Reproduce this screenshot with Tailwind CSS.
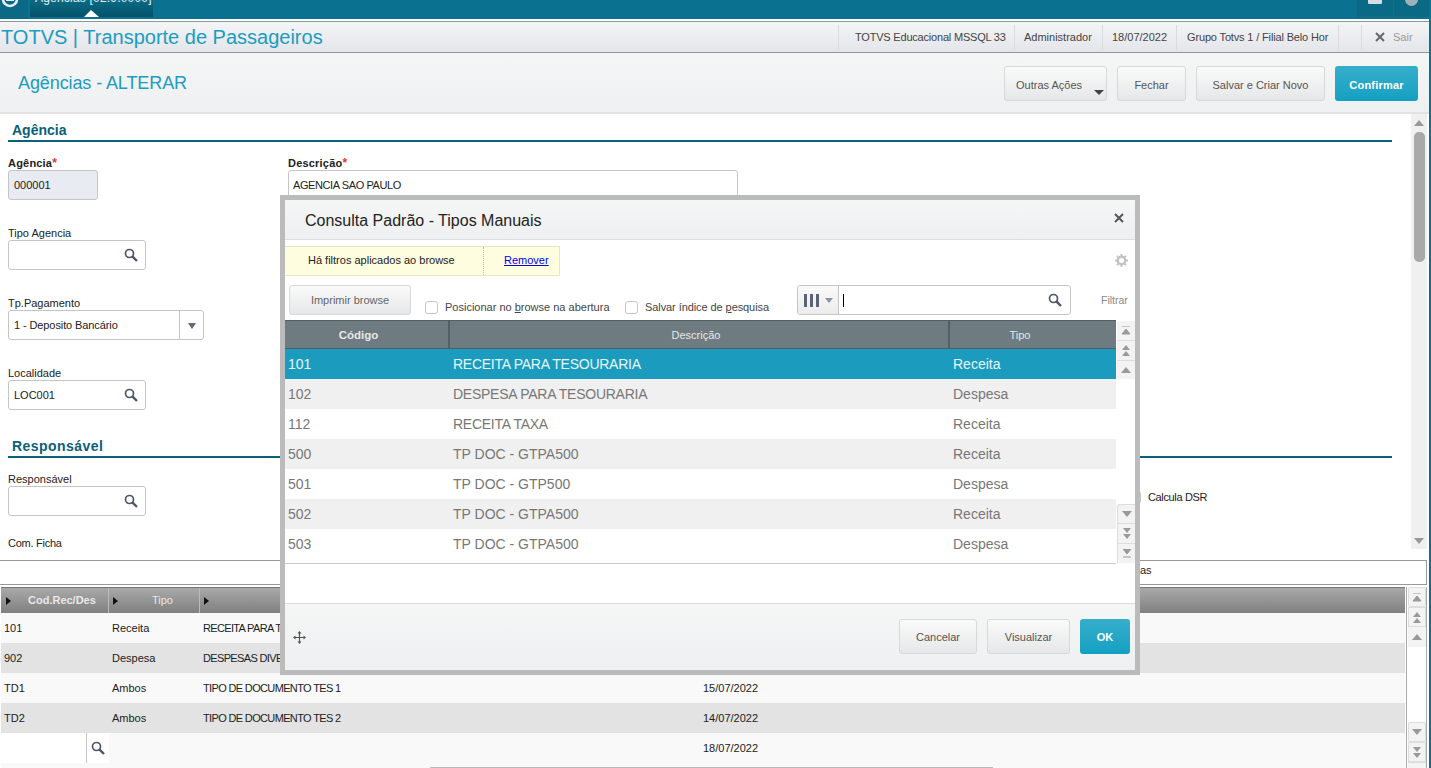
<!DOCTYPE html>
<html lang="pt-BR">

<head>
  <meta charset="UTF-8" />
  <title>TOTVS | Transporte de Passageiros</title>
  <script src="https://cdn.jsdelivr.net/npm/@tailwindcss/browser@4"></script>
</head>

<body class="bg-white">
  <div class="relative w-[1431px] h-[768px] overflow-hidden flex flex-col font-['Liberation_Sans',Arial,sans-serif] text-[11px] text-[#222] border-r-2 border-[#0b7190]">

    <!-- top menu -->
    <div class="h-[19px] shrink-0 bg-[#0b7190] flex overflow-hidden">
      <div class="w-[28px] bg-[#0a6a85] overflow-hidden">
        <svg width="28" height="19"><circle cx="10" cy="-1" r="7" fill="none" stroke="#e8eef0" stroke-width="2.6"/><path d="M6 0h8" stroke="#e8eef0" stroke-width="2"/></svg>
      </div>
      <div class="relative ml-[2px] w-[123px] h-[17px] bg-gradient-to-b from-[#0a6a85] to-[#05526a] overflow-hidden">
        <div class="flex gap-[7px] pl-[5px] -mt-[9px] leading-[14px] text-[12px] tracking-[0.2px] text-white/90 whitespace-nowrap"><span>Agências [02.9.0000]</span><span class="text-white/50">×</span></div>
        <svg class="absolute left-[54px] top-[10px]" width="15" height="7"><path d="M0 7 7 0l8 7z" fill="#fff"/></svg>
      </div>
      <div class="flex-1"></div>
      <div class="w-[36px] mr-[1px] h-[17px] bg-[#0a6a85] flex justify-center overflow-hidden">
        <div class="w-[14px] h-[4px] bg-[#d5dde2] rounded-b-[1px]"></div>
      </div>
      <div class="w-[35px] h-[17px] bg-[#0a6a85] flex justify-center overflow-hidden">
        <div class="w-[13px] h-[13px] -mt-[7px] rounded-full bg-[#9fb2bb]"></div>
      </div>
    </div>

    <!-- product bar -->
    <div class="h-[32px] shrink-0 mt-[2px] border-t border-b border-t-[#8f979b] border-b-[#8f979b] bg-gradient-to-b from-[#f3f5f6] to-[#e3e6ea] flex items-center relative">
      <div class="pl-[1px] text-[20px] leading-[28px] text-[#1b9cc0] whitespace-nowrap w-[839px]">TOTVS | Transporte de Passageiros</div>
      <div class="flex items-center h-[25px] text-[#444] whitespace-nowrap">
        <div class="w-[176px] h-full pl-[16px] leading-[25px] border-l border-[#d9dcdf] tracking-[-0.2px]">TOTVS Educacional MSSQL 33</div>
        <div class="w-[88px] h-full pl-[9px] leading-[25px] border-l border-[#d9dcdf]">Administrador</div>
        <div class="w-[74px] h-full pl-[9px] leading-[25px] border-l border-[#d9dcdf]">18/07/2022</div>
        <div class="w-[162px] h-full pl-[10px] leading-[25px] border-l border-[#d9dcdf] tracking-[-0.15px]">Grupo Totvs 1 / Filial Belo Hor</div>
        <div class="w-[23px] h-full border-l border-[#d9dcdf]"></div>
        <div class="h-full pl-[13px] flex items-center gap-[8px] border-l border-[#d9dcdf] text-[#999] w-[68px]">
          <svg width="10" height="10" viewBox="0 0 10 10"><path d="M1 1l8 8M9 1 1 9" stroke="#666" stroke-width="2"/></svg>
          <span>Sair</span>
        </div>
      </div>
    </div>

    <!-- page header -->
    <div class="h-[61px] shrink-0 border-b-2 border-[#e2e3e4] bg-gradient-to-b from-[#f5f6f6] to-[#eef0f1] flex items-center pl-[18px] pr-[11px]">
      <div class="text-[18px] text-[#1b9cc0] tracking-[-0.1px] mt-[2px]">Agências - ALTERAR</div>
      <div class="ml-auto flex gap-[10px] mt-[2px] text-[#555]">
        <button class="relative w-[103px] h-[35px] rounded-[3px] border border-[#d8d8d8] bg-gradient-to-b from-[#fafafa] to-[#e6e7e8] pt-[3px] text-left"><span class="pl-[11px]">Outras Ações</span>
          <svg class="absolute right-[2px] bottom-[5px]" width="10" height="5"><path d="M0 0h10L5 5z" fill="#444"/></svg>
        </button>
        <button class="w-[69px] h-[35px] pt-[3px] rounded-[3px] border border-[#d8d8d8] bg-gradient-to-b from-[#fafafa] to-[#e6e7e8]">Fechar</button>
        <button class="w-[129px] h-[35px] pt-[3px] rounded-[3px] border border-[#d8d8d8] bg-gradient-to-b from-[#fafafa] to-[#e6e7e8]">Salvar e Criar Novo</button>
        <button class="w-[83px] h-[35px] pt-[3px] rounded-[3px] bg-gradient-to-b from-[#35aecb] to-[#11a0c2] text-white font-bold tracking-[0.2px]">Confirmar</button>
      </div>
    </div>

    <!-- form -->
    <div class="relative h-[446px] shrink-0 overflow-hidden pl-[8px]">
      <div class="w-[1384px]">
        <div class="h-[28px] pt-[8px] pl-[4px] border-b-2 border-[#0a6078] text-[14px] leading-[16px] font-bold text-[#0a6078]">Agência</div>

        <div class="flex mt-[14px]">
          <div class="w-[280px]">
            <div class="h-[14px] leading-[14px] font-bold tracking-[0.2px]">Agência<span class="text-[#e53535] text-[12px]">*</span></div>
            <div class="w-[90px] h-[30px] rounded-[3px] border border-[#c5c5c5] bg-[#e8ebf2] pl-[5px] leading-[28px]">000001</div>
          </div>
          <div>
            <div class="h-[14px] leading-[14px] font-bold tracking-[0.2px]">Descrição<span class="text-[#e53535] text-[12px]">*</span></div>
            <div class="w-[450px] h-[30px] rounded-[3px] border border-[#c5c5c5] pl-[4px] leading-[28px] tracking-[-0.4px]">AGENCIA SAO PAULO</div>
          </div>
        </div>

        <div class="mt-[26px] h-[14px] leading-[14px]">Tipo Agencia</div>
        <div class="w-[138px] h-[30px] rounded-[3px] border border-[#c5c5c5] flex items-center justify-end pr-[7px]">
          <svg width="14" height="14" viewBox="0 0 14 14"><circle cx="5.5" cy="5.5" r="4" fill="none" stroke="#4d5666" stroke-width="1.7"/><path d="M8.6 8.6 13 13" stroke="#4d5666" stroke-width="2.4"/></svg>
        </div>

        <div class="mt-[26px] h-[14px] leading-[14px]">Tp.Pagamento</div>
        <div class="w-[196px] h-[30px] rounded-[3px] border border-[#c5c5c5] flex">
          <div class="w-[171px] pl-[5px] leading-[28px] border-r border-[#c5c5c5] tracking-[-0.1px]">1 - Deposito Bancário</div>
          <div class="flex-1 flex items-center justify-center">
            <svg width="10" height="7"><path d="M1 1h8L5 7z" fill="#667"/></svg>
          </div>
        </div>

        <div class="mt-[26px] h-[14px] leading-[14px]">Localidade</div>
        <div class="w-[138px] h-[30px] rounded-[3px] border border-[#c5c5c5] flex items-center justify-between pl-[5px] pr-[7px]">
          <span>LOC001</span>
          <svg width="14" height="14" viewBox="0 0 14 14"><circle cx="5.5" cy="5.5" r="4" fill="none" stroke="#4d5666" stroke-width="1.7"/><path d="M8.6 8.6 13 13" stroke="#4d5666" stroke-width="2.4"/></svg>
        </div>

        <div class="mt-[28px] h-[20px] pl-[4px] border-b-2 border-[#0a6078] text-[14px] leading-[16px] font-bold text-[#0a6078] tracking-[0.45px]">Responsável</div>

        <div class="mt-[14px] h-[14px] leading-[14px]">Responsável</div>
        <div class="flex items-center">
          <div class="w-[138px] h-[30px] rounded-[3px] border border-[#c5c5c5] flex items-center justify-end pr-[7px]">
            <svg width="14" height="14" viewBox="0 0 14 14"><circle cx="5.5" cy="5.5" r="4" fill="none" stroke="#4d5666" stroke-width="1.7"/><path d="M8.6 8.6 13 13" stroke="#4d5666" stroke-width="2.4"/></svg>
          </div>
          <div class="ml-[982px] -mt-[7px] w-[13px] h-[13px] rounded-[3px] border border-[#c5c5c5]"></div>
          <div class="ml-[7px] -mt-[7px] tracking-[-0.35px]">Calcula DSR</div>
        </div>

        <div class="mt-[20px] h-[14px] leading-[14px] tracking-[-0.25px]">Com. Ficha</div>
      </div>

      <!-- form scrollbar -->
      <div class="absolute left-[1411px] top-0 w-[16px] h-[435px] bg-[#f0f0f0] flex flex-col items-center">
        <svg class="mt-[6px]" width="10" height="6"><path d="M5 0l5 6H0z" fill="#999"/></svg>
        <div class="mt-[6px] w-[11px] h-[130px] rounded-[5px] bg-[#a9a9a9]"></div>
        <svg class="mt-auto mb-[5px]" width="10" height="6"><path d="M0 0h10L5 6z" fill="#999"/></svg>
      </div>
    </div>

    <!-- filter line -->
    <div class="h-[25px] w-[1427px] shrink-0 border border-l-0 border-[#999] bg-white pl-[1140px] leading-[18px]">as</div>

    <!-- lower grid -->
    <div class="flex-1 flex pl-[1px] pt-[2px] w-[1427px]">
      <div class="w-[1404px]">
        <div class="h-[26px] flex bg-gradient-to-b from-[#a9a9a9] to-[#808080] border-t border-[#777] text-[#e8e8e8] font-bold">
          <div class="w-[108px] flex items-center pl-[5px] border-r border-[#bbb]"><svg width="5" height="8"><path d="M0 0l5 4-5 4z" fill="#111"/></svg><span class="ml-[17px] whitespace-nowrap">Cod.Rec/Des</span></div>
          <div class="w-[91px] flex items-center pl-[4px] border-r border-[#bbb]"><svg width="5" height="8"><path d="M0 0l5 4-5 4z" fill="#111"/></svg><span class="ml-[34px] font-normal">Tipo</span></div>
          <div class="flex items-center pl-[4px]"><svg width="5" height="8"><path d="M0 0l5 4-5 4z" fill="#111"/></svg></div>
        </div>
        <div class="h-[30px] flex items-center bg-[#f9f9f9]"><span class="w-[111px] pl-[3px]">101</span><span class="w-[91px]">Receita</span><span class="w-[500px] tracking-[-0.65px]">RECEITA PARA TESOURARIA</span></div>
        <div class="h-[30px] flex items-center bg-[#e3e3e3]"><span class="w-[111px] pl-[3px]">902</span><span class="w-[91px]">Despesa</span><span class="w-[500px] tracking-[-0.65px]">DESPESAS DIVERSAS</span></div>
        <div class="h-[30px] flex items-center bg-[#f9f9f9]"><span class="w-[111px] pl-[3px]">TD1</span><span class="w-[91px]">Ambos</span><span class="w-[500px] tracking-[-0.65px]">TIPO DE DOCUMENTO TES 1</span><span>15/07/2022</span></div>
        <div class="h-[30px] flex items-center bg-[#e3e3e3]"><span class="w-[111px] pl-[3px]">TD2</span><span class="w-[91px]">Ambos</span><span class="w-[500px] tracking-[-0.65px]">TIPO DE DOCUMENTO TES 2</span><span>14/07/2022</span></div>
        <div class="h-[35px] flex bg-[#f9f9f9]">
          <div class="w-[108px] h-[30px] bg-white flex">
            <div class="w-[86px] border-r border-[#c5c5c5]"></div>
            <div class="flex-1 flex items-center justify-center"><svg width="14" height="14" viewBox="0 0 14 14"><circle cx="5.5" cy="5.5" r="4" fill="none" stroke="#4d5666" stroke-width="1.7"/><path d="M8.6 8.6 13 13" stroke="#4d5666" stroke-width="2.4"/></svg></div>
          </div>
          <span class="ml-[594px] h-[30px] leading-[30px]">18/07/2022</span>
        </div>
      </div>
      <div class="ml-[1px] w-[21px] border-l border-r border-[#aaa] flex flex-col pl-[1px]">
        <div class="h-[20px] shrink-0 rounded-[2px] border border-[#ddd] bg-[#f3f3f3] flex items-center justify-center"><svg width="10" height="9"><path d="M1 0h8M5 3l4 5H1z" stroke="#999" fill="#999"/></svg></div>
        <div class="h-[20px] shrink-0 border border-[#ddd] bg-[#f3f3f3] flex items-center justify-center"><svg width="10" height="11"><path d="M5 0l4 5H1zM5 6l4 5H1z" fill="#999"/></svg></div>
        <div class="h-[20px] shrink-0 bg-[#f3f3f3] flex items-center justify-center"><svg width="10" height="6"><path d="M5 0l5 6H0z" fill="#999"/></svg></div>
        <div class="h-[75px] shrink-0"></div>
        <div class="h-[20px] shrink-0 rounded-[2px] border border-[#ddd] bg-[#f3f3f3] flex items-center justify-center"><svg width="10" height="6"><path d="M0 0h10L5 6z" fill="#999"/></svg></div>
        <div class="h-[20px] shrink-0 border border-[#ddd] bg-[#f3f3f3] flex items-center justify-center"><svg width="10" height="11"><path d="M1 0h8L5 5zM1 6h8l-4 5z" fill="#999"/></svg></div>
        <div class="h-[6px] shrink-0 border-t border-[#ddd] bg-[#f3f3f3]"></div>
      </div>
    </div>

    <!-- horizontal scrollbar hint -->
    <div class="absolute left-[430px] top-[767px] w-[563px] h-px bg-[#bbb]"></div>

    <!-- modal -->
    <div class="absolute left-[280px] top-[195px] w-[860px] h-[480px] border-[5px] border-[#bbb] bg-white flex flex-col">
      <div class="h-[40px] shrink-0 border-b border-[#ddd] bg-gradient-to-b from-[#f5f6f6] to-[#eef0f1] flex items-center pl-[20px] pr-[11px]">
        <span class="text-[16px] text-[#222] mt-[2px]">Consulta Padrão - Tipos Manuais</span>
        <svg class="ml-auto -mt-[3px]" width="10" height="10" viewBox="0 0 10 10"><path d="M1 1l8 8M9 1 1 9" stroke="#555" stroke-width="2"/></svg>
      </div>

      <div class="mt-[6px] h-[30px] shrink-0 flex items-center">
        <div class="w-[275px] h-[30px] bg-[#fefde0] border border-l-0 border-[#e6e6c0] flex items-center">
          <div class="w-[199px] h-full pl-[23px] leading-[26px] border-r border-dotted border-[#bbb]">Há filtros aplicados ao browse</div>
          <a href="#" class="ml-[20px] -mt-[2px] text-[#0000ee] underline">Remover</a>
        </div>
        <svg class="ml-auto mr-[7px] -mt-[2px]" width="13" height="13" viewBox="0 0 14 14"><circle cx="7" cy="7" r="4" fill="none" stroke="#c4c4c4" stroke-width="2.6"/><path d="M7 0v3M7 11v3M0 7h3M11 7h3M2 2l2 2M10 10l2 2M12 2l-2 2M2 12l2-2" stroke="#c4c4c4" stroke-width="2"/></svg>
      </div>

      <div class="mt-[9px] h-[30px] shrink-0 flex">
        <button class="ml-[4px] w-[122px] h-[30px] rounded-[3px] border border-[#d8d8d8] bg-gradient-to-b from-[#fafafa] to-[#e6e7e8] text-[#666]">Imprimir browse</button>
        <div class="ml-[14px] mt-[16px] w-[13px] h-[13px] rounded-[3px] border border-[#c5c5c5]"></div>
        <div class="ml-[7px] mt-[15px] leading-[14px] text-[#444] whitespace-nowrap w-[173px]">Posicionar no <span class="underline">b</span>rowse na abertura</div>
        <div class="ml-[7px] mt-[16px] w-[13px] h-[13px] rounded-[3px] border border-[#c5c5c5]"></div>
        <div class="ml-[7px] mt-[15px] leading-[14px] text-[#444] whitespace-nowrap w-[152px] tracking-[-0.08px]">Salvar índice de <span class="underline">p</span>esquisa</div>
        <div class="w-[274px] h-[30px] rounded-[3px] border border-[#c5c5c5] flex items-center">
          <div class="w-[41px] h-full rounded-l-[3px] border-r border-[#c5c5c5] bg-gradient-to-b from-[#fafafa] to-[#ececec] flex items-center pl-[6px] gap-[6px]">
            <svg width="15" height="13"><path d="M0 0h3v13H0zM6 0h3v13H6zM12 0h3v13h-3z" fill="#5a6475"/></svg>
            <svg width="8" height="5"><path d="M0 0h8L4 5z" fill="#8b93a0"/></svg>
          </div>
          <div class="ml-[4px] w-px h-[13px] bg-black"></div>
          <svg class="ml-auto mr-[8px]" width="14" height="14" viewBox="0 0 14 14"><circle cx="5.5" cy="5.5" r="4" fill="none" stroke="#4d5666" stroke-width="1.7"/><path d="M8.6 8.6 13 13" stroke="#4d5666" stroke-width="2.4"/></svg>
        </div>
        <div class="ml-[30px] leading-[31px] text-[10.500px] text-[#888]">Filtrar</div>
      </div>

      <div class="mt-[5px] flex h-[244px] shrink-0">
        <div class="w-[831px] h-[244px] border-b border-[#ccc] text-[14px] text-[#777]">
          <div class="h-[29px] flex bg-[#6e7b80] border-t border-b border-[#555f63] text-[#e8e8e8] text-[11px]">
            <div class="w-[165px] pr-[16px] text-center leading-[28px] font-bold text-[11.500px] border-r-2 border-[#555f63]">Código</div>
            <div class="w-[500px] pr-[6px] text-center leading-[28px] border-r-2 border-[#555f63]">Descrição</div>
            <div class="flex-1 text-center leading-[28px] pr-[26px]">Tipo</div>
          </div>
          <div class="h-[30px] flex items-center bg-[#1b9cbf] text-[#e6f6fa]"><span class="w-[168px] pl-[3px]">101</span><span class="w-[500px] tracking-[-0.26px]">RECEITA PARA TESOURARIA</span><span>Receita</span></div>
          <div class="h-[30px] flex items-center bg-[#f0f0f0]"><span class="w-[168px] pl-[3px]">102</span><span class="w-[500px] tracking-[-0.26px]">DESPESA PARA TESOURARIA</span><span>Despesa</span></div>
          <div class="h-[30px] flex items-center"><span class="w-[168px] pl-[3px]">112</span><span class="w-[500px] tracking-[-0.26px]">RECEITA TAXA</span><span>Receita</span></div>
          <div class="h-[30px] flex items-center bg-[#f0f0f0]"><span class="w-[168px] pl-[3px]">500</span><span class="w-[500px]">TP DOC - GTPA500</span><span>Receita</span></div>
          <div class="h-[30px] flex items-center"><span class="w-[168px] pl-[3px]">501</span><span class="w-[500px]">TP DOC - GTP500</span><span>Despesa</span></div>
          <div class="h-[30px] flex items-center bg-[#f0f0f0]"><span class="w-[168px] pl-[3px]">502</span><span class="w-[500px]">TP DOC - GTPA500</span><span>Receita</span></div>
          <div class="h-[30px] flex items-center"><span class="w-[168px] pl-[3px]">503</span><span class="w-[500px]">TP DOC - GTPA500</span><span>Despesa</span></div>
        </div>
        <div class="w-[19px] flex flex-col pl-[1px]">
          <div class="h-[20px] mt-[1px] border-b border-[#ddd] bg-[#f3f3f3] flex items-center justify-center"><svg width="10" height="9"><path d="M1 0h8M5 3l4 5H1z" stroke="#999" fill="#999"/></svg></div>
          <div class="h-[20px] border-b border-[#ddd] bg-[#f3f3f3] flex items-center justify-center"><svg width="10" height="11"><path d="M5 0l4 5H1zM5 6l4 5H1z" fill="#999"/></svg></div>
          <div class="h-[18px] bg-[#f3f3f3] flex items-center justify-center"><svg width="10" height="6"><path d="M5 0l5 6H0z" fill="#999"/></svg></div>
          <div class="h-[125px]"></div>
          <div class="h-[20px] rounded-tl-[3px] border-t border-l border-b border-[#ddd] bg-[#f3f3f3] flex items-center justify-center"><svg width="10" height="6"><path d="M0 0h10L5 6z" fill="#999"/></svg></div>
          <div class="h-[20px] border-l border-b border-[#ddd] bg-[#f3f3f3] flex items-center justify-center"><svg width="10" height="11"><path d="M1 0h8L5 5zM1 6h8l-4 5z" fill="#999"/></svg></div>
          <div class="h-[19px] border-l border-[#ddd] bg-[#f3f3f3] flex items-center justify-center"><svg width="10" height="9"><path d="M1 0h8L5 5zM1 8h8" stroke="#999" fill="#999"/></svg></div>
        </div>
      </div>

      <div class="mt-[39px] flex-1 border-t border-[#ddd] bg-gradient-to-b from-[#f5f6f6] to-[#eef0f1] flex items-center pl-[8px] pr-[5px]">
        <svg width="13" height="13" viewBox="0 0 13 13"><path d="M6.500 1v11M1 6.500h11" stroke="#555" stroke-width="1.2"/><path d="M6.500 0l2 2.500h-4zM6.500 13l2-2.500h-4zM0 6.500 2.500 4.500v4zM13 6.500l-2.500-2v4z" fill="#555"/></svg>
        <div class="ml-auto flex gap-[10px] -mt-[2px] text-[#555]">
          <button class="w-[78px] h-[35px] pt-[3px] rounded-[3px] border border-[#d8d8d8] bg-gradient-to-b from-[#fafafa] to-[#e6e7e8]">Cancelar</button>
          <button class="w-[83px] h-[35px] pt-[3px] rounded-[3px] border border-[#d8d8d8] bg-gradient-to-b from-[#fafafa] to-[#e6e7e8]">Visualizar</button>
          <button class="w-[50px] h-[35px] pt-[3px] rounded-[3px] bg-gradient-to-b from-[#35aecb] to-[#11a0c2] text-white font-bold">OK</button>
        </div>
      </div>
    </div>
  </div>
</body>

</html>
